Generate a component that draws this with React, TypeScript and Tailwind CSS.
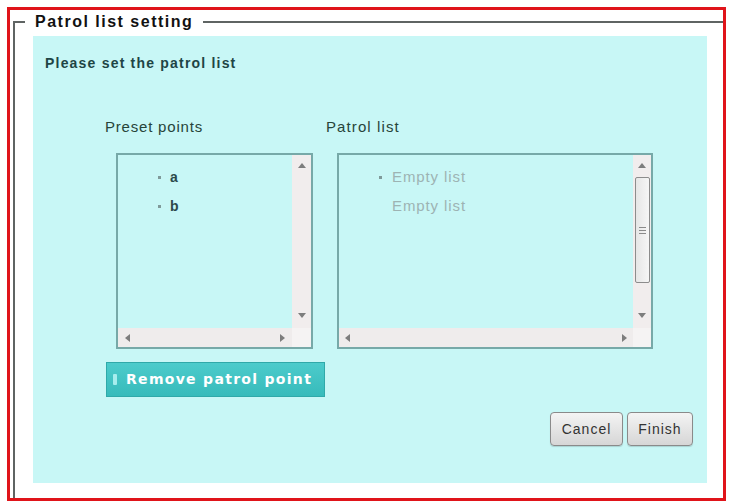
import React from "react";

const Tri = ({ dir }: { dir: "up" | "down" | "left" | "right" }) => {
  const pts =
    dir === "up"
      ? "0,5 4,0 8,5"
      : dir === "down"
      ? "0,0 8,0 4,5"
      : dir === "left"
      ? "5,0 5,8 0,4"
      : "0,0 0,8 5,4";
  const w = dir === "up" || dir === "down" ? 8 : 5;
  const h = dir === "up" || dir === "down" ? 5 : 8;
  return (
    <svg width={w} height={h} viewBox={`0 0 ${w} ${h}`}>
      <polygon points={pts} fill="#7d7d7d" />
    </svg>
  );
};

const Bullet = ({ hidden }: { hidden?: boolean }) => (
  <span className={`inline-block w-[3px] h-[3px] ${hidden ? "bg-transparent" : "bg-[#7f9a9a]"}`} />
);

function LeftList() {
  return (
    <div className="ml-[11px] w-[197px] h-[196px] border-2 border-[#77a9a8] grid grid-cols-[1fr_19px] grid-rows-[1fr_19px]">
      <div className="pt-[8px] text-[14px] text-[#2b4a4a]">
        <div className="h-[29px] flex items-center pl-[40px] gap-[9px]">
          <Bullet />
          <span className="font-bold">a</span>
        </div>
        <div className="h-[29px] flex items-center pl-[40px] gap-[9px]">
          <Bullet />
          <span className="font-bold">b</span>
        </div>
      </div>
      <div className="bg-[#f1eded] flex flex-col items-center justify-between pt-[8px] pb-[10px]">
        <Tri dir="up" />
        <Tri dir="down" />
      </div>
      <div className="bg-[#efecec] flex items-center justify-between px-[7px]">
        <Tri dir="left" />
        <Tri dir="right" />
      </div>
      <div className="bg-[#f5f3f3]" />
    </div>
  );
}

function RightList() {
  return (
    <div className="ml-[11px] w-[316px] h-[196px] border-2 border-[#77a9a8] grid grid-cols-[1fr_18px] grid-rows-[1fr_19px]">
      <div className="pt-[8px] text-[15px] tracking-[0.9px] text-[#9db3b3]">
        <div className="h-[29px] flex items-center pl-[40px] gap-[10px]">
          <Bullet />
          <span>Empty list</span>
        </div>
        <div className="h-[29px] flex items-center pl-[40px] gap-[10px]">
          <Bullet hidden />
          <span>Empty list</span>
        </div>
      </div>
      <div className="bg-[#f1eded] flex flex-col items-center pt-[8px] pb-[10px]">
        <Tri dir="up" />
        <div className="mt-[9px] w-[15px] h-[106px] border border-[#8c8c8c] rounded-[2px] bg-linear-to-r from-[#e6e6e6] to-[#f6f6f6] flex flex-col items-center justify-center gap-[2px]">
          <div className="w-[7px] h-px bg-[#8a8a8a]" />
          <div className="w-[7px] h-px bg-[#8a8a8a]" />
          <div className="w-[7px] h-px bg-[#8a8a8a]" />
        </div>
        <div className="flex-1" />
        <Tri dir="down" />
      </div>
      <div className="bg-[#efecec] flex items-center justify-between px-[6px]">
        <Tri dir="left" />
        <Tri dir="right" />
      </div>
      <div className="bg-[#f5f3f3]" />
    </div>
  );
}

export default function App() {
  return (
    <div className="w-[729px] h-[504px] bg-white pt-[7px] pl-[7px]" style={{ fontFamily: '"Liberation Sans", Arial, sans-serif' }}>
      <div className="w-[719px] h-[494px] border-[3px] border-[#e0141a] flex flex-col">
        <fieldset className="mt-[3px] ml-[3px] flex-1 border-t-2 border-l-2 border-[#5f6463] min-w-0">
          <legend className="ml-[10px] px-[10px] text-[16px] leading-[18px] tracking-[1.5px] font-bold text-[#111]">
            Patrol list setting
          </legend>
          <div className="mt-[5px] ml-[18px] w-[674px] h-[447px] bg-[#c8f7f6] flex flex-col">
            <div className="mt-[19px] ml-[12px] text-[14px] leading-[16px] tracking-[1.2px] font-bold text-[#1e4545]">
              Please set the patrol list
            </div>
            <div className="mt-[48px] pl-[72px] flex">
              <div className="w-[208px] flex flex-col">
                <div className="text-[15px] leading-[16px] tracking-[0.8px] text-[#27443a]">Preset points</div>
                <div className="mt-[18px]">
                  <LeftList />
                </div>
                <button className="mt-[13px] ml-[1px] w-[219px] h-[35px] border border-[#2fa9a9] bg-linear-to-b from-[#4ccbcb] to-[#37bbbb] flex items-center pl-[6px] gap-[9px] text-white font-bold text-[14px] tracking-[1.3px]" style={{ fontFamily: '"DejaVu Sans", Verdana, sans-serif' }}>
                  <span className="inline-block w-[4px] h-[11px] rounded-[1px] bg-[#a6eded]" />
                  <span>Remove patrol point</span>
                </button>
              </div>
              <div className="ml-[13px] flex flex-col">
                <div className="text-[15px] leading-[16px] tracking-[1.1px] text-[#27443a]">Patrol list</div>
                <div className="mt-[18px]">
                  <RightList />
                </div>
              </div>
            </div>
            <div className="mt-[15px] pr-[14px] flex justify-end gap-[4px]">
              <button className="w-[73px] h-[34px] rounded-[4px] border border-[#8a8a8a] bg-linear-to-b from-[#f4f4f4] to-[#d6d6d6] text-[14px] tracking-[1px] text-[#333] shadow-[0_1px_1px_rgba(0,0,0,0.15)]">
                Cancel
              </button>
              <button className="w-[66px] h-[34px] rounded-[4px] border border-[#8a8a8a] bg-linear-to-b from-[#f4f4f4] to-[#d6d6d6] text-[14px] tracking-[1px] text-[#333] shadow-[0_1px_1px_rgba(0,0,0,0.15)]">
                Finish
              </button>
            </div>
          </div>
        </fieldset>
      </div>
    </div>
  );
}
